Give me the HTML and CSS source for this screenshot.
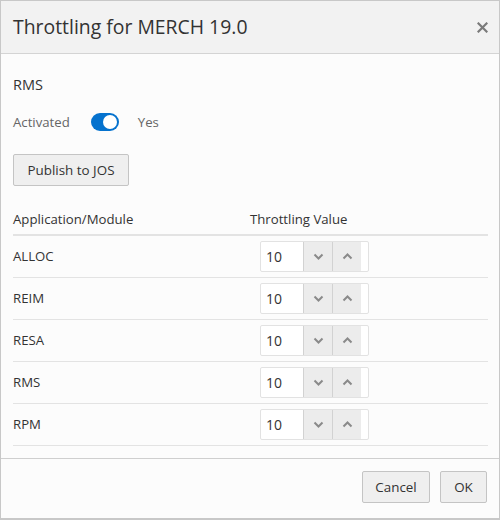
FILE: index.html
```html
<!DOCTYPE html>
<html>
<head>
<meta charset="utf-8">
<link rel="stylesheet" href="styles.css">
</head>
<body>
<div class="dialog">
  <div class="header">
    <div class="title">Throttling for MERCH 19.0</div>
    <svg class="close" width="11" height="11" viewBox="0 0 11 11"><path d="M1.5 1.5 L9.5 9.5 M9.5 1.5 L1.5 9.5" stroke="#7a7a7a" stroke-width="2.2" stroke-linecap="square"/></svg>
  </div>
  <div class="body">
    <div class="section">RMS</div>
    <div class="switch-row">
      <span class="muted">Activated</span>
      <span class="toggle"><span class="knob"></span></span>
      <span class="muted">Yes</span>
    </div>
    <button class="btn publish">Publish to JOS</button>
    <div class="table">
      <div class="thead">
        <div>Application/Module</div>
        <div>Throttling Value</div>
      </div>
      <div class="row"><div class="name">ALLOC</div><div class="val"><div class="spin"><span class="num">10</span><span class="sb"><svg width="11" height="7" viewBox="0 0 11 7"><path d="M1.5 1.5 L5.5 5.5 L9.5 1.5" fill="none" stroke="#8a8a8a" stroke-width="2"/></svg></span><span class="sb"><svg width="11" height="7" viewBox="0 0 11 7"><path d="M1.5 5.5 L5.5 1.5 L9.5 5.5" fill="none" stroke="#8a8a8a" stroke-width="2"/></svg></span></div></div></div>
      <div class="row"><div class="name">REIM</div><div class="val"><div class="spin"><span class="num">10</span><span class="sb"><svg width="11" height="7" viewBox="0 0 11 7"><path d="M1.5 1.5 L5.5 5.5 L9.5 1.5" fill="none" stroke="#8a8a8a" stroke-width="2"/></svg></span><span class="sb"><svg width="11" height="7" viewBox="0 0 11 7"><path d="M1.5 5.5 L5.5 1.5 L9.5 5.5" fill="none" stroke="#8a8a8a" stroke-width="2"/></svg></span></div></div></div>
      <div class="row"><div class="name">RESA</div><div class="val"><div class="spin"><span class="num">10</span><span class="sb"><svg width="11" height="7" viewBox="0 0 11 7"><path d="M1.5 1.5 L5.5 5.5 L9.5 1.5" fill="none" stroke="#8a8a8a" stroke-width="2"/></svg></span><span class="sb"><svg width="11" height="7" viewBox="0 0 11 7"><path d="M1.5 5.5 L5.5 1.5 L9.5 5.5" fill="none" stroke="#8a8a8a" stroke-width="2"/></svg></span></div></div></div>
      <div class="row"><div class="name">RMS</div><div class="val"><div class="spin"><span class="num">10</span><span class="sb"><svg width="11" height="7" viewBox="0 0 11 7"><path d="M1.5 1.5 L5.5 5.5 L9.5 1.5" fill="none" stroke="#8a8a8a" stroke-width="2"/></svg></span><span class="sb"><svg width="11" height="7" viewBox="0 0 11 7"><path d="M1.5 5.5 L5.5 1.5 L9.5 5.5" fill="none" stroke="#8a8a8a" stroke-width="2"/></svg></span></div></div></div>
      <div class="row"><div class="name">RPM</div><div class="val"><div class="spin"><span class="num">10</span><span class="sb"><svg width="11" height="7" viewBox="0 0 11 7"><path d="M1.5 1.5 L5.5 5.5 L9.5 1.5" fill="none" stroke="#8a8a8a" stroke-width="2"/></svg></span><span class="sb"><svg width="11" height="7" viewBox="0 0 11 7"><path d="M1.5 5.5 L5.5 1.5 L9.5 5.5" fill="none" stroke="#8a8a8a" stroke-width="2"/></svg></span></div></div></div>
    </div>
  </div>
  <div class="footer">
    <button class="btn cancel">Cancel</button>
    <button class="btn ok">OK</button>
  </div>
</div>
</body>
</html>
```

FILE: styles.css
```css
* { box-sizing: border-box; }
html, body { margin: 0; padding: 0; }
body {
  font-family: "Open Sans", "Noto Sans", "DejaVu Sans", sans-serif;
  color: #333;
  font-size: 13.2px;
  background: #fff;
}
.dialog {
  width: 500px;
  height: 520px;
  border: 1px solid #c8c8c8;
  border-bottom-width: 2px;
  display: flex;
  flex-direction: column;
  background: #fcfcfc;
}
.header {
  height: 53px;
  flex: none;
  background: #f2f2f2;
  border-bottom: 1px solid #d4d4d4;
  display: flex;
  align-items: center;
  justify-content: space-between;
  padding: 0 11px 2px 12px;
}
.title {
  font-size: 19.4px;
  color: #333;
}
.close { display: block; margin-top: 3px; }
.body {
  flex: 1;
  padding: 21px 11px 0 12px;
}
.section {
  font-size: 14.5px;
  line-height: 20px;
  color: #333;
}
.switch-row {
  margin-top: 18px;
  height: 18px;
  display: flex;
  align-items: center;
}
.muted { color: #666; font-size: 13.2px; }
.toggle {
  width: 28px;
  height: 18px;
  border-radius: 9px;
  background: #0572ce;
  margin: 0 19px 0 21px;
  position: relative;
  display: inline-block;
}
.knob {
  position: absolute;
  right: 2px;
  top: 2px;
  width: 14px;
  height: 14px;
  border-radius: 50%;
  background: #fff;
}
.btn {
  font-family: inherit;
  font-size: 13.4px;
  color: #333;
  background: #efefef;
  border: 1px solid #c4c4c4;
  border-radius: 2px;
  height: 32px;
  padding: 0 12px;
  line-height: 30px;
}
.publish {
  display: block;
  margin-top: 23px;
  width: 116px;
  padding: 0;
}
.table { margin-top: 23px; }
.thead {
  display: grid;
  grid-template-columns: 237px 1fr;
  line-height: 20px;
  padding-bottom: 5px;
  border-bottom: 2px solid #e3e3e3;
}
.row {
  display: grid;
  grid-template-columns: 237px 1fr;
  height: 42px;
  align-items: center;
  border-bottom: 1px solid #e3e3e3;
}
.name { margin-top: -1px; }
.val { padding-left: 10px; }
.spin {
  width: 109px;
  height: 31px;
  border: 1px solid #e2e2e2;
  border-radius: 2px;
  background: #fff;
  display: flex;
  padding-right: 7px;
}
.num {
  width: 42px;
  padding-left: 5px;
  line-height: 29px;
  font-size: 14px;
  color: #333;
}
.sb {
  width: 29px;
  background: #ececec;
  border-left: 1px solid #d2d2d2;
  display: flex;
  align-items: center;
  justify-content: center;
}
.footer {
  flex: none;
  height: 60px;
  border-top: 1px solid #cfcfcf;
  display: flex;
  justify-content: flex-end;
  gap: 10px;
  padding: 12px 12px 0 0;
}
.cancel { width: 68px; padding: 0; }
.ok { width: 47px; padding: 0; }
```
